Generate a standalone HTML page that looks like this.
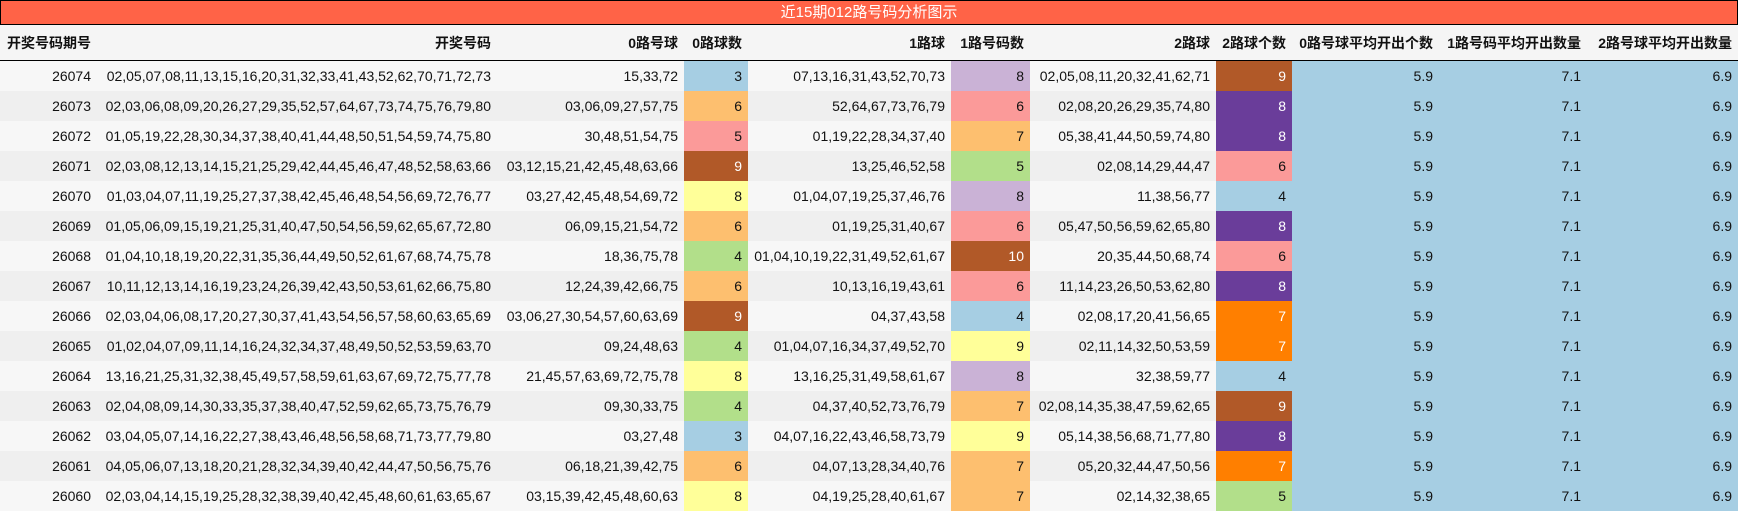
<!DOCTYPE html>
<html><head><meta charset="utf-8"><style>
body{margin:0;width:1738px;height:513px;overflow:hidden;background:#fff;font-family:"Liberation Sans","Noto Sans CJK SC",sans-serif;}
.title{box-sizing:border-box;height:25px;background:#ff6347;border:1px solid #000;color:#fff;text-align:center;font-size:15px;line-height:23px;}
table{border-collapse:collapse;table-layout:fixed;width:1738px;font-size:14px;}
td,th{text-align:right;padding:0 6px 0 0;white-space:nowrap;overflow:hidden;height:30px;color:#111;}
th{height:35px;background:#f5f5f5;font-weight:bold;border-bottom:1px solid #000;font-size:14px;}
tr:nth-child(odd) td{background:#f7f7f7}
tr:nth-child(even) td{background:#efefef}
td.a{background:#a6cee3!important}
td.g{background:#b2df8a!important}
td.p{background:#fb9a99!important}
td.o{background:#fdbf6f!important}
td.O{background:#ff7f00!important;color:#fff}
td.l{background:#cab2d6!important}
td.P{background:#6a3d9a!important;color:#fff}
td.y{background:#ffff99!important}
td.b{background:#b15928!important;color:#fff}
</style></head><body>
<div class="title">近15期012路号码分析图示</div>
<table>
<colgroup><col style="width:97px"><col style="width:400px"><col style="width:187px"><col style="width:64px"><col style="width:203px"><col style="width:79px"><col style="width:186px"><col style="width:76px"><col style="width:147px"><col style="width:148px"><col style="width:151px"></colgroup>
<thead><tr><th>开奖号码期号</th><th>开奖号码</th><th>0路号球</th><th>0路球数</th><th>1路球</th><th>1路号码数</th><th>2路球</th><th>2路球个数</th><th>0路号球平均开出个数</th><th>1路号码平均开出数量</th><th>2路号球平均开出数量</th></tr></thead>
<tbody>
<tr><td>26074</td><td>02,05,07,08,11,13,15,16,20,31,32,33,41,43,52,62,70,71,72,73</td><td>15,33,72</td><td class="a">3</td><td>07,13,16,31,43,52,70,73</td><td class="l">8</td><td>02,05,08,11,20,32,41,62,71</td><td class="b">9</td><td class="a">5.9</td><td class="a">7.1</td><td class="a">6.9</td></tr>
<tr><td>26073</td><td>02,03,06,08,09,20,26,27,29,35,52,57,64,67,73,74,75,76,79,80</td><td>03,06,09,27,57,75</td><td class="o">6</td><td>52,64,67,73,76,79</td><td class="p">6</td><td>02,08,20,26,29,35,74,80</td><td class="P">8</td><td class="a">5.9</td><td class="a">7.1</td><td class="a">6.9</td></tr>
<tr><td>26072</td><td>01,05,19,22,28,30,34,37,38,40,41,44,48,50,51,54,59,74,75,80</td><td>30,48,51,54,75</td><td class="p">5</td><td>01,19,22,28,34,37,40</td><td class="o">7</td><td>05,38,41,44,50,59,74,80</td><td class="P">8</td><td class="a">5.9</td><td class="a">7.1</td><td class="a">6.9</td></tr>
<tr><td>26071</td><td>02,03,08,12,13,14,15,21,25,29,42,44,45,46,47,48,52,58,63,66</td><td>03,12,15,21,42,45,48,63,66</td><td class="b">9</td><td>13,25,46,52,58</td><td class="g">5</td><td>02,08,14,29,44,47</td><td class="p">6</td><td class="a">5.9</td><td class="a">7.1</td><td class="a">6.9</td></tr>
<tr><td>26070</td><td>01,03,04,07,11,19,25,27,37,38,42,45,46,48,54,56,69,72,76,77</td><td>03,27,42,45,48,54,69,72</td><td class="y">8</td><td>01,04,07,19,25,37,46,76</td><td class="l">8</td><td>11,38,56,77</td><td class="a">4</td><td class="a">5.9</td><td class="a">7.1</td><td class="a">6.9</td></tr>
<tr><td>26069</td><td>01,05,06,09,15,19,21,25,31,40,47,50,54,56,59,62,65,67,72,80</td><td>06,09,15,21,54,72</td><td class="o">6</td><td>01,19,25,31,40,67</td><td class="p">6</td><td>05,47,50,56,59,62,65,80</td><td class="P">8</td><td class="a">5.9</td><td class="a">7.1</td><td class="a">6.9</td></tr>
<tr><td>26068</td><td>01,04,10,18,19,20,22,31,35,36,44,49,50,52,61,67,68,74,75,78</td><td>18,36,75,78</td><td class="g">4</td><td>01,04,10,19,22,31,49,52,61,67</td><td class="b">10</td><td>20,35,44,50,68,74</td><td class="p">6</td><td class="a">5.9</td><td class="a">7.1</td><td class="a">6.9</td></tr>
<tr><td>26067</td><td>10,11,12,13,14,16,19,23,24,26,39,42,43,50,53,61,62,66,75,80</td><td>12,24,39,42,66,75</td><td class="o">6</td><td>10,13,16,19,43,61</td><td class="p">6</td><td>11,14,23,26,50,53,62,80</td><td class="P">8</td><td class="a">5.9</td><td class="a">7.1</td><td class="a">6.9</td></tr>
<tr><td>26066</td><td>02,03,04,06,08,17,20,27,30,37,41,43,54,56,57,58,60,63,65,69</td><td>03,06,27,30,54,57,60,63,69</td><td class="b">9</td><td>04,37,43,58</td><td class="a">4</td><td>02,08,17,20,41,56,65</td><td class="O">7</td><td class="a">5.9</td><td class="a">7.1</td><td class="a">6.9</td></tr>
<tr><td>26065</td><td>01,02,04,07,09,11,14,16,24,32,34,37,48,49,50,52,53,59,63,70</td><td>09,24,48,63</td><td class="g">4</td><td>01,04,07,16,34,37,49,52,70</td><td class="y">9</td><td>02,11,14,32,50,53,59</td><td class="O">7</td><td class="a">5.9</td><td class="a">7.1</td><td class="a">6.9</td></tr>
<tr><td>26064</td><td>13,16,21,25,31,32,38,45,49,57,58,59,61,63,67,69,72,75,77,78</td><td>21,45,57,63,69,72,75,78</td><td class="y">8</td><td>13,16,25,31,49,58,61,67</td><td class="l">8</td><td>32,38,59,77</td><td class="a">4</td><td class="a">5.9</td><td class="a">7.1</td><td class="a">6.9</td></tr>
<tr><td>26063</td><td>02,04,08,09,14,30,33,35,37,38,40,47,52,59,62,65,73,75,76,79</td><td>09,30,33,75</td><td class="g">4</td><td>04,37,40,52,73,76,79</td><td class="o">7</td><td>02,08,14,35,38,47,59,62,65</td><td class="b">9</td><td class="a">5.9</td><td class="a">7.1</td><td class="a">6.9</td></tr>
<tr><td>26062</td><td>03,04,05,07,14,16,22,27,38,43,46,48,56,58,68,71,73,77,79,80</td><td>03,27,48</td><td class="a">3</td><td>04,07,16,22,43,46,58,73,79</td><td class="y">9</td><td>05,14,38,56,68,71,77,80</td><td class="P">8</td><td class="a">5.9</td><td class="a">7.1</td><td class="a">6.9</td></tr>
<tr><td>26061</td><td>04,05,06,07,13,18,20,21,28,32,34,39,40,42,44,47,50,56,75,76</td><td>06,18,21,39,42,75</td><td class="o">6</td><td>04,07,13,28,34,40,76</td><td class="o">7</td><td>05,20,32,44,47,50,56</td><td class="O">7</td><td class="a">5.9</td><td class="a">7.1</td><td class="a">6.9</td></tr>
<tr><td>26060</td><td>02,03,04,14,15,19,25,28,32,38,39,40,42,45,48,60,61,63,65,67</td><td>03,15,39,42,45,48,60,63</td><td class="y">8</td><td>04,19,25,28,40,61,67</td><td class="o">7</td><td>02,14,32,38,65</td><td class="g">5</td><td class="a">5.9</td><td class="a">7.1</td><td class="a">6.9</td></tr>
</tbody></table>
</body></html>
